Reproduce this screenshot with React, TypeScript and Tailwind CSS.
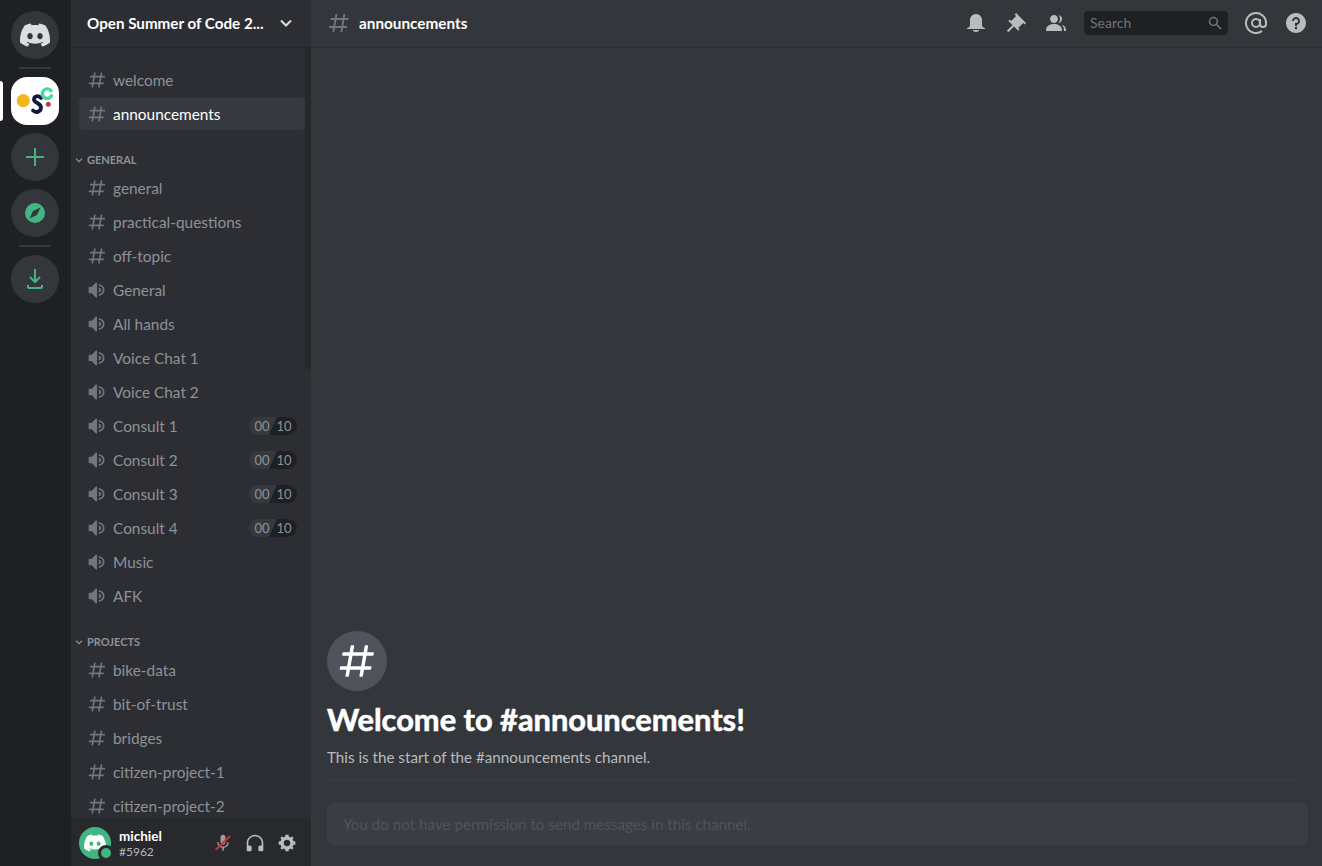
import React from "react";

const hash = "M5.88657 21C5.57547 21 5.3399 20.7189 5.39427 20.4126L6.00001 17H2.59511C2.28449 17 2.04905 16.7198 2.10259 16.4138L2.27759 15.4138C2.31946 15.1746 2.52722 15 2.77011 15H6.35001L7.41001 9H4.00511C3.69449 9 3.45905 8.71977 3.51259 8.41381L3.68759 7.41381C3.72946 7.17456 3.93722 7 4.18011 7H7.76001L8.39677 3.41262C8.43914 3.17391 8.64664 3 8.88907 3H9.87344C10.1845 3 10.4201 3.28107 10.3657 3.58738L9.76001 7H15.76L16.3968 3.41262C16.4391 3.17391 16.6466 3 16.8891 3H17.8734C18.1845 3 18.4201 3.28107 18.3657 3.58738L17.76 7H21.1649C21.4755 7 21.711 7.28023 21.6574 7.58619L21.4824 8.58619C21.4406 8.82544 21.2328 9 20.9899 9H17.41L16.35 15H19.7549C20.0655 15 20.301 15.2802 20.2474 15.5862L20.0724 16.5862C20.0306 16.8254 19.8228 17 19.5799 17H16L15.3632 20.5874C15.3209 20.8261 15.1134 21 14.8709 21H13.8866C13.5755 21 13.3399 20.7189 13.3943 20.4126L14 17H8.00001L7.36325 20.5874C7.32088 20.8261 7.11337 21 6.87094 21H5.88657ZM9.41045 9L8.35045 15H14.3504L15.4104 9H9.41045Z";
const speaker = "M11.383 3.07904C11.009 2.92504 10.579 3.01004 10.293 3.29604L6 8.00204H3C2.45 8.00204 2 8.45304 2 9.00204V15.002C2 15.552 2.45 16.002 3 16.002H6L10.293 20.71C10.579 20.996 11.009 21.082 11.383 20.927C11.757 20.772 12 20.407 12 20.002V4.00204C12 3.59904 11.757 3.23204 11.383 3.07904ZM14 5.00195V7.00195C16.757 7.00195 19 9.24595 19 12.002C19 14.759 16.757 17.002 14 17.002V19.002C17.86 19.002 21 15.863 21 12.002C21 8.14295 17.86 5.00195 14 5.00195ZM14 9.00195C15.654 9.00195 17 10.349 17 12.002C17 13.657 15.654 15.002 14 15.002V13.002C14.551 13.002 15 12.553 15 12.002C15 11.451 14.551 11.002 14 11.002V9.00195Z";
const clyde = "M20.317 4.3698a19.7913 19.7913 0 00-4.8851-1.5152.0741.0741 0 00-.0785.0371c-.211.3753-.4447.8648-.6083 1.2495-1.8447-.2762-3.68-.2762-5.4868 0-.1636-.3933-.4058-.8742-.6177-1.2495a.077.077 0 00-.0785-.037 19.7363 19.7363 0 00-4.8852 1.515.0699.0699 0 00-.0321.0277C.5334 9.0458-.319 13.5799.0992 18.0578a.0824.0824 0 00.0312.0561c2.0528 1.5076 4.0413 2.4228 5.9929 3.0294a.0777.0777 0 00.0842-.0276c.4616-.6304.8731-1.2952 1.226-1.9942a.076.076 0 00-.0416-.1057c-.6528-.2476-1.2743-.5495-1.8722-.8923a.077.077 0 01-.0076-.1277c.1258-.0943.2517-.1923.3718-.2914a.0743.0743 0 01.0776-.0105c3.9278 1.7933 8.18 1.7933 12.0614 0a.0739.0739 0 01.0785.0095c.1202.099.246.1981.3728.2924a.077.077 0 01-.0066.1276 12.2986 12.2986 0 01-1.873.8914.0766.0766 0 00-.0407.1067c.3604.698.7719 1.3628 1.225 1.9932a.076.076 0 00.0842.0286c1.961-.6067 3.9495-1.5219 6.0023-3.0294a.077.077 0 00.0313-.0552c.5004-5.177-.8382-9.6739-3.5485-13.6604a.061.061 0 00-.0312-.0286zM8.02 15.3312c-1.1825 0-2.1569-1.0857-2.1569-2.419 0-1.3332.9555-2.4189 2.157-2.4189 1.2108 0 2.1757 1.0952 2.1568 2.419 0 1.3332-.9555 2.4189-2.1569 2.4189zm7.9748 0c-1.1825 0-2.1569-1.0857-2.1569-2.419 0-1.3332.9554-2.4189 2.1569-2.4189 1.2108 0 2.1757 1.0952 2.1568 2.419 0 1.3332-.946 2.4189-2.1568 2.4189Z";

function Icon({ d, className }: { d: string | string[]; className?: string }) {
  const ds = Array.isArray(d) ? d : [d];
  return (
    <svg viewBox="0 0 24 24" className={className} fill="currentColor" fillRule="evenodd" clipRule="evenodd">
      {ds.map((p, i) => <path key={i} d={p} />)}
    </svg>
  );
}

function Channel({ name, voice, active, limit }: { name: string; voice?: boolean; active?: boolean; limit?: boolean }) {
  return (
    <div className={`ml-2 mb-0.5 h-8 shrink-0 rounded flex items-center pl-2 pr-2 ${active ? "bg-[#36393e]" : ""}`}>
      <Icon d={voice ? speaker : hash} className="w-5 h-5 mr-1.5 shrink-0 text-[#72767d]" />
      <span className={`text-[15.4px] leading-5 ${active ? "text-white" : "text-[#8e9297]"}`}>{name}</span>
      {limit && (
        <div className="ml-auto flex h-[18px] w-12 rounded-full overflow-hidden text-[13px] leading-[18px] text-[#8e9297] bg-[#36393e]">
          <span className="w-6 text-center pl-0.5">00</span>
          <span className="w-7 -ml-1 pl-0.5 text-center bg-[#1e2023] [clip-path:polygon(8px_0,100%_0,100%_100%,0_100%)]">10</span>
        </div>
      )}
    </div>
  );
}

function Category({ name, className }: { name: string; className: string }) {
  return (
    <div className={`flex items-center h-[18px] shrink-0 mb-[3px] pl-[3px] ${className}`}>
      <svg viewBox="0 0 24 24" className="w-[10px] h-[10px] mr-[3px] text-[#8e9297]" fill="none" stroke="currentColor" strokeWidth="3">
        <path d="M5 9l7 7 7-7" />
      </svg>
      <span className="text-[11px] font-bold uppercase text-[#8e9297]">{name}</span>
    </div>
  );
}

function RailButton({ children, className }: { children: React.ReactNode; className?: string }) {
  return <div className={`w-12 h-12 rounded-full flex items-center justify-center bg-[#33363b] shrink-0 ${className ?? ""}`}>{children}</div>;
}

function Divider({ className }: { className: string }) {
  return <div className={`w-8 h-0.5 rounded-sm bg-[#33363b] shrink-0 ${className}`} />;
}

export default function App() {
  return (
    <div className="flex h-[866px] w-[1322px] overflow-hidden bg-[#33363b] font-['Lato','Noto_Sans',sans-serif]">
      {/* server rail */}
      <nav className="relative w-[71px] shrink-0 bg-[#1e2023] flex flex-col items-center pt-[11px] pr-px">
        <RailButton>
          <Icon d={clyde} className="w-[30px] h-[30px] text-[#dcddde]" />
        </RailButton>
        <Divider className="mt-2 mb-2" />
        <div className="absolute left-0 top-[81px] w-[3px] h-10 rounded-r bg-white" />
        <div className="w-12 h-12 rounded-2xl bg-white shrink-0 flex items-center justify-center">
          <svg viewBox="0 0 48 48" className="w-12 h-12">
            <circle cx="12.3" cy="23.7" r="6.6" fill="#f3b61f" />
            <path d="M30 21c-3-3-7-2-7 1.5 0 4 7 3 7 8 0 4-5 6-8 3" fill="none" stroke="#14183e" strokeWidth="3.8" strokeLinecap="round" />
            <path d="M40 13.8a4.8 4.8 0 1 0 .5 5" fill="none" stroke="#43dc9c" strokeWidth="3.4" strokeLinecap="round" />
            <circle cx="37.3" cy="27.3" r="2.5" fill="#c33b4a" />
          </svg>
        </div>
        <RailButton className="mt-2">
          <svg viewBox="0 0 24 24" className="w-6 h-6 text-[#43b581]" fill="currentColor"><path d="M21 11h-8V3h-2v8H3v2h8v8h2v-8h8z" /></svg>
        </RailButton>
        <RailButton className="mt-2">
          <svg viewBox="0 0 24 24" className="w-6 h-6">
            <circle cx="12" cy="12" r="10" fill="#43b581" />
            <path d="M17.5 6.5l-3.6 7.4-7.4 3.6 3.6-7.4z" fill="#33363b" />
          </svg>
        </RailButton>
        <Divider className="mt-2 mb-2" />
        <RailButton>
          <svg viewBox="0 0 24 24" className="w-6 h-6 text-[#43b581]" fill="currentColor">
            <path d="M16.293 9.293L17.707 10.707L12 16.414L6.293 10.707L7.707 9.293L11 12.586V2H13V12.586L16.293 9.293ZM18 20V18H20V20C20 21.102 19.104 22 18 22H6C4.896 22 4 21.102 4 20V18H6V20H18Z" />
          </svg>
        </RailButton>
      </nav>

      {/* channel sidebar */}
      <aside className="w-[240px] shrink-0 bg-[#2c2e33] flex flex-col h-full">
        <header className="h-12 shrink-0 flex items-center pl-4 pr-4 pb-0.5 border-b border-[#25272b]">
          <span className="text-[15.2px] font-bold text-white leading-5 flex-1">Open Summer of Code 2...</span>
          <svg viewBox="0 0 18 18" className="w-[18px] h-[18px] text-[#dcddde]" fill="none" stroke="currentColor" strokeWidth="2">
            <path d="M4 6.5l5 5 5-5" />
          </svg>
        </header>
        <div className="relative flex-1 min-h-0 overflow-hidden">
          <div className="absolute right-0 top-0 w-1.5 h-[321px] bg-[#26282c]" />
          <div className="flex flex-col pr-1.5 pt-4 h-full overflow-hidden">
            <Channel name="welcome" />
            <Channel name="announcements" active />
            <Category name="General" className="mt-[19px]" />
            <Channel name="general" />
            <Channel name="practical-questions" />
            <Channel name="off-topic" />
            <Channel name="General" voice />
            <Channel name="All hands" voice />
            <Channel name="Voice Chat 1" voice />
            <Channel name="Voice Chat 2" voice />
            <Channel name="Consult 1" voice limit />
            <Channel name="Consult 2" voice limit />
            <Channel name="Consult 3" voice limit />
            <Channel name="Consult 4" voice limit />
            <Channel name="Music" voice />
            <Channel name="AFK" voice />
            <Category name="Projects" className="mt-[19px]" />
            <Channel name="bike-data" />
            <Channel name="bit-of-trust" />
            <Channel name="bridges" />
            <Channel name="citizen-project-1" />
            <Channel name="citizen-project-2" />
          </div>
        </div>
        <div className="h-[49px] shrink-0 bg-[#27292d] flex items-center pl-2 pr-2 pt-[3px]">
          <div className="relative w-8 h-8 rounded-full bg-[#43b581] flex items-center justify-center shrink-0">
            <Icon d={clyde} className="w-[22px] h-[22px] text-white" />
            <span className="absolute -right-[3px] -bottom-[2px] w-4 h-4 rounded-full bg-[#43b581] border-[3px] border-[#27292d]" />
          </div>
          <div className="ml-2 flex-1 min-w-0 pt-0.5">
            <div className="text-[13.5px] font-bold leading-[15px] text-white">michiel</div>
            <div className="text-[12px] leading-[15px] text-[#b9bbbe]">#5962</div>
          </div>
          <div className="flex items-center">
            <div className="w-8 h-8 flex items-center justify-center relative">
              <Icon d="M14.99 11C14.99 12.66 13.66 14 12 14C10.34 14 9 12.66 9 11V5C9 3.34 10.34 2 12 2C13.66 2 15 3.34 15 5L14.99 11ZM12 16.1C14.76 16.1 17.3 14 17.3 11H19C19 14.42 16.28 17.24 13 17.72V21H11V17.72C7.72 17.23 5 14.41 5 11H6.7C6.7 14 9.24 16.1 12 16.1Z" className="w-5 h-5 text-[#9a9c9f]" />
              <svg viewBox="0 0 20 20" className="absolute w-5 h-5 left-1.5 top-1.5"><path d="M2.5 17L17 3" stroke="#c2343f" strokeWidth="2" /></svg>
            </div>
            <div className="w-8 h-8 flex items-center justify-center">
              <Icon d="M12 2.00305C6.486 2.00305 2 6.48805 2 12.0031V20.0031C2 21.1071 2.895 22.0031 4 22.0031H6C7.104 22.0031 8 21.1071 8 20.0031V17.0031C8 15.8991 7.104 15.0031 6 15.0031H4V12.0031C4 7.59105 7.589 4.00305 12 4.00305C16.411 4.00305 20 7.59105 20 12.0031V15.0031H18C16.896 15.0031 16 15.8991 16 17.0031V20.0031C16 21.1071 16.896 22.0031 18 22.0031H20C21.104 22.0031 22 21.1071 22 20.0031V12.0031C22 6.48805 17.514 2.00305 12 2.00305Z" className="w-5 h-5 text-[#b9bbbe]" />
            </div>
            <div className="w-8 h-8 flex items-center justify-center">
              <Icon d="M19.738 10H22V14H19.739C19.498 14.931 19.1 15.798 18.565 16.564L20 18L18 20L16.565 18.564C15.797 19.099 14.932 19.498 14 19.738V22H10V19.738C9.069 19.498 8.203 19.099 7.436 18.564L6 20L4 18L5.436 16.564C4.901 15.799 4.502 14.932 4.262 14H2V10H4.262C4.502 9.068 4.9 8.202 5.436 7.436L4 6L6 4L7.436 5.436C8.202 4.9 9.068 4.502 10 4.262V2H14V4.261C14.932 4.502 15.797 4.9 16.565 5.435L18 3.999L20 5.999L18.564 7.436C19.099 8.202 19.498 9.069 19.738 10ZM12 16C14.2091 16 16 14.2091 16 12C16 9.79086 14.2091 8 12 8C9.79086 8 8 9.79086 8 12C8 14.2091 9.79086 16 12 16Z" className="w-5 h-5 text-[#b9bbbe]" />
            </div>
          </div>
        </div>
      </aside>

      {/* main */}
      <main className="flex-1 min-w-0 flex flex-col h-full">
        <header className="h-12 shrink-0 flex items-center pl-4 pr-[14px] pb-0.5 border-b border-[#2c2e33]">
          <Icon d={hash} className="w-6 h-6 mr-2 text-[#72767d]" />
          <h1 className="text-[15.3px] font-bold leading-5 text-white">announcements</h1>
          <div className="ml-auto flex items-center">
            <Icon d="M18 9V14C18 15.657 19.344 17 21 17V18H3V17C4.656 17 6 15.657 6 14V9C6 5.686 8.686 3 12 3C15.314 3 18 5.686 18 9ZM11.9999 21C10.5239 21 9.24993 20.19 8.55493 19H15.4449C14.7499 20.19 13.4759 21 11.9999 21Z" className="w-6 h-6 text-[#b9bbbe]" />
            <Icon d="M22 12L12.101 2.10101L10.686 3.51401L12.101 4.92901L7.15096 9.87801V9.88001L5.73596 8.46501L4.32196 9.88001L8.56496 14.122L2.90796 19.778L4.32196 21.192L9.97896 15.536L14.222 19.778L15.636 18.364L14.222 16.95L19.171 12H19.172L20.586 13.414L22 12Z" className="w-6 h-6 ml-4 text-[#b9bbbe]" />
            <Icon d={["M14 8.00598C14 10.211 12.206 12.006 10 12.006C7.795 12.006 6 10.211 6 8.00598C6 5.80098 7.794 4.00598 10 4.00598C12.206 4.00598 14 5.80098 14 8.00598ZM2 19.006C2 15.473 5.29 13.006 10 13.006C14.711 13.006 18 15.473 18 19.006V20.006H2V19.006Z", "M20.0001 20.006H22.0001V19.006C22.0001 16.4433 20.2697 14.4415 17.5213 13.5352C19.0621 14.9127 20.0001 16.8059 20.0001 19.006V20.006Z", "M14.8834 11.9077C16.6657 11.5044 18.0001 9.9077 18.0001 8.00598C18.0001 5.96916 16.4693 4.28218 14.4971 4.0367C15.4322 5.09511 16.0001 6.48524 16.0001 8.00598C16.0001 9.44888 15.4889 10.7742 14.6378 11.8102C14.7203 11.8418 14.8022 11.8743 14.8834 11.9077Z"]} className="w-6 h-6 ml-4 text-[#b9bbbe]" />
            <div className="ml-4 w-36 h-6 rounded bg-[#1e2023] flex items-center pl-1.5 pr-1.5">
              <span className="text-[14px] leading-6 text-[#72767d] flex-1">Search</span>
              <svg viewBox="0 0 18 18" className="w-[14px] h-[14px] text-[#72767d]" fill="none" stroke="currentColor" strokeWidth="2"><circle cx="7" cy="7" r="5" /><path d="M11 11l6 6" /></svg>
            </div>
            <svg viewBox="0 0 24 24" className="w-6 h-6 ml-4 text-[#b9bbbe]" fill="none" stroke="currentColor" strokeWidth="2">
              <circle cx="12" cy="12" r="4" />
              <path d="M16 8v5a3 3 0 0 0 6 0v-1a10 10 0 1 0-4 8" />
            </svg>
            <Icon d="M12 2C6.486 2 2 6.487 2 12C2 17.515 6.486 22 12 22C17.514 22 22 17.515 22 12C22 6.487 17.514 2 12 2ZM12 18.25C11.31 18.25 10.75 17.691 10.75 17C10.75 16.31 11.31 15.75 12 15.75C12.69 15.75 13.25 16.31 13.25 17C13.25 17.691 12.69 18.25 12 18.25ZM13 13.875V15H11V12H12C13.104 12 14 11.103 14 10C14 8.896 13.104 8 12 8C10.896 8 10 8.896 10 10H8C8 7.795 9.795 6 12 6C14.205 6 16 7.795 16 10C16 11.861 14.723 13.429 13 13.875Z" className="w-6 h-6 ml-4 text-[#b9bbbe]" />
          </div>
        </header>
        <div className="flex-1 min-h-0 flex flex-col justify-end pl-4 pr-[26px]">
          <div className="w-[60px] h-[60px] rounded-full bg-[#4f545c] flex items-center justify-center">
            <Icon d={hash} className="w-[42px] h-[42px] text-white" />
          </div>
          <h2 className="mt-[9px] text-[30.8px] leading-[40px] font-bold text-white [-webkit-text-stroke:0.6px_white]">Welcome to #announcements!</h2>
          <p className="mt-[7px] text-[15.2px] leading-5 text-[#b9bbbe]">This is the start of the #announcements channel.</p>
          <div className="mt-3 h-px bg-[#393c42]" />
        </div>
        <div className="pt-[22px] pb-5 pl-4 pr-[14px] shrink-0">
          <div className="h-11 rounded-lg bg-[#3a3d43] flex items-center pl-4">
            <span className="text-[15.2px] text-[#4f545c]">You do not have permission to send messages in this channel.</span>
          </div>
        </div>
      </main>
    </div>
  );
}
